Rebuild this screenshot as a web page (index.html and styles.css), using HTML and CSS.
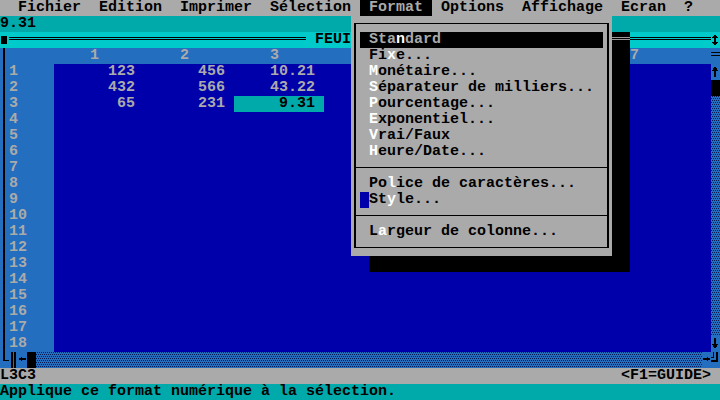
FILE: index.html
```html
<!DOCTYPE html>
<html lang="fr">
<head>
<meta charset="utf-8">
<title>Feuille de calcul</title>
<link rel="stylesheet" href="styles.css">
</head>
<body>
<div class="screen">
  <div class="menubar">  Fichier  Edition  Imprimer  Sélection <span class="menu-active"> Format </span> Options  Affichage  Ecran  ?</div>
  <div class="formula">9.31</div>
  <div class="titlebar">
    <span class="cell closebox"><span class="closebox-mark"></span></span>
    <span class="dline"></span>
    <span class="title"> FEUIL1.XLS </span>
    <span class="dline"></span>
    <span class="cell"><svg class="ico" viewBox="0 0 9 16" width="9" height="16"><polygon points="4,2 7.5,6 5,6 5,10 7.5,10 4,14 0.5,10 3,10 3,6 0.5,6"/></svg></span>
  </div>

  <div class="sheet">
    <div class="frame-left"></div>
    <div class="grid">
      <div class="grow head"><span class="rn"></span><span class="hc">1</span><span class="hc">2</span><span class="hc">3</span><span class="hc">4</span><span class="hc">5</span><span class="hc">6</span><span class="hc">7</span></div>
      <div class="grow"><span class="rn">1</span><div class="cells"><span class="c">123</span><span class="c">456</span><span class="c">10.21</span></div></div>
      <div class="grow"><span class="rn">2</span><div class="cells"><span class="c">432</span><span class="c">566</span><span class="c">43.22</span></div></div>
      <div class="grow"><span class="rn">3</span><div class="cells"><span class="c">65</span><span class="c">231</span><span class="c sel">9.31</span></div></div>
      <div class="grow"><span class="rn">4</span><div class="cells"></div></div>
      <div class="grow"><span class="rn">5</span><div class="cells"></div></div>
      <div class="grow"><span class="rn">6</span><div class="cells"></div></div>
      <div class="grow"><span class="rn">7</span><div class="cells"></div></div>
      <div class="grow"><span class="rn">8</span><div class="cells"></div></div>
      <div class="grow"><span class="rn">9</span><div class="cells"></div></div>
      <div class="grow"><span class="rn">10</span><div class="cells"></div></div>
      <div class="grow"><span class="rn">11</span><div class="cells"></div></div>
      <div class="grow"><span class="rn">12</span><div class="cells"></div></div>
      <div class="grow"><span class="rn">13</span><div class="cells"></div></div>
      <div class="grow"><span class="rn">14</span><div class="cells"></div></div>
      <div class="grow"><span class="rn">15</span><div class="cells"></div></div>
      <div class="grow"><span class="rn">16</span><div class="cells"></div></div>
      <div class="grow"><span class="rn">17</span><div class="cells"></div></div>
      <div class="grow"><span class="rn">18</span><div class="cells"></div></div>
    </div>
    <div class="vscroll">
      <span class="cell lb vs-split"></span>
      <span class="cell lb"><svg class="ico" viewBox="0 0 9 16" width="9" height="16"><polygon points="4,2 7.5,7 5,7 5,13 3,13 3,7 0.5,7"/></svg></span>
      <span class="cell thumb"></span>
      <span class="track vtrack"></span>
      <span class="cell lb"><svg class="ico" viewBox="0 0 9 16" width="9" height="16"><polygon points="4,13 7.5,8 5,8 5,2 3,2 3,8 0.5,8"/></svg></span>
    </div>
  </div>

  <div class="hscroll">
    <span class="cell lb"><svg class="ico" viewBox="0 0 9 16" width="9" height="16"><rect x="3" y="0" width="2" height="9"/><rect x="3" y="8" width="6" height="1"/></svg></span>
    <span class="cell lb"><svg class="ico" viewBox="0 0 9 16" width="9" height="16"><rect x="2" y="0" width="2" height="16"/><rect x="5" y="0" width="2" height="16"/></svg></span>
    <span class="cell lb"><svg class="ico" viewBox="0 0 9 16" width="9" height="16"><polygon points="0.5,7 4,4.5 4,6 8,6 8,8 4,8 4,9.5"/></svg></span>
    <span class="cell thumb"></span>
    <span class="track htrack"></span>
    <span class="cell lb"><svg class="ico" viewBox="0 0 9 16" width="9" height="16"><polygon points="8.5,7 5,4.5 5,6 1,6 1,8 5,8 5,9.5"/></svg></span>
    <span class="cell lb"><svg class="ico" viewBox="0 0 9 16" width="9" height="16"><rect x="5" y="0" width="2" height="10"/><rect x="0" y="8" width="7" height="2"/><rect x="2" y="0" width="1" height="6"/><rect x="0" y="5" width="3" height="1"/></svg></span>
  </div>

  <div class="status"><span class="txt">L3C3</span><span class="txt">&lt;F1=GUIDE&gt;</span></div>
  <div class="message">Applique ce format numérique à la sélection.</div>

  <div class="shadow-right"></div>
  <div class="shadow-bottom"></div>

  <div class="dropdown">
    <div class="menu-box">
      <div class="item hi"><span class="lead"></span><span class="label">Sta<span class="key">n</span>dard</span></div>
      <div class="item"><span class="lead"></span><span class="label">Fi<span class="key">x</span>e...</span></div>
      <div class="item"><span class="lead"></span><span class="label"><span class="key">M</span>onétaire...</span></div>
      <div class="item"><span class="lead"></span><span class="label"><span class="key">S</span>éparateur de milliers...</span></div>
      <div class="item"><span class="lead"></span><span class="label"><span class="key">P</span>ourcentage...</span></div>
      <div class="item"><span class="lead"></span><span class="label"><span class="key">E</span>xponentiel...</span></div>
      <div class="item"><span class="lead"></span><span class="label"><span class="key">V</span>rai/Faux</span></div>
      <div class="item"><span class="lead"></span><span class="label"><span class="key">H</span>eure/Date...</span></div>
      <div class="sep"></div>
      <div class="item"><span class="lead"></span><span class="label">Po<span class="key">l</span>ice de caractères...</span></div>
      <div class="item"><span class="lead cursor"></span><span class="label">St<span class="key">y</span>le...</span></div>
      <div class="sep"></div>
      <div class="item"><span class="lead"></span><span class="label">L<span class="key">a</span>rgeur de colonne...</span></div>
    </div>
  </div>
</div>
</body>
</html>
```
FILE: styles.css
```css
* { box-sizing: border-box; margin: 0; padding: 0; }
html, body { background: #000; }
body { margin: 0; }

.screen {
  position: relative;
  width: 720px;
  height: 400px;
  overflow: hidden;
  font-family: "Liberation Mono", "DejaVu Sans Mono", monospace;
  font-size: 15px;
  font-weight: bold;
  line-height: 16px;
  color: #000;
}

.menubar {
  height: 16px;
  background: #aaaaaa;
  white-space: pre;
}
.menu-active {
  display: inline-block;
  height: 16px;
  vertical-align: top;
  background: #000;
  color: #aaaaaa;
}

.formula {
  height: 16px;
  background: #00aaaa;
  white-space: pre;
}

.titlebar {
  display: flex;
  height: 16px;
  background: #00caca;
}
.cell {
  display: block;
  flex: none;
  width: 9px;
  height: 16px;
}
.ico { display: block; fill: #000; shape-rendering: crispEdges; }
.closebox { padding: 4px 0 0 1px; }
.closebox-mark {
  display: block;
  width: 6px;
  height: 8px;
  background: #000;
}
.dline {
  flex: 1;
  height: 16px;
  background: linear-gradient(to bottom, transparent 5px, #000 5px 6px, transparent 6px 7px, #000 7px 8px, transparent 8px);
}
.title { white-space: pre; flex: none; }

.sheet {
  display: flex;
  height: 304px;
}
.frame-left {
  width: 9px;
  flex: none;
  background: linear-gradient(90deg, transparent 3px, #000 3px 5px, transparent 5px), #236ebe;
}
.grid {
  flex: 1;
  display: flex;
  flex-direction: column;
}
.grow {
  display: flex;
  height: 16px;
}
.rn {
  flex: none;
  width: 45px;
  height: 16px;
  background: #236ebe;
  color: #aaaaaa;
  white-space: pre;
}
.head {
  background: #236ebe;
  color: #aaaaaa;
  overflow: hidden;
}
.hc {
  flex: none;
  width: 90px;
  padding-left: 36px;
  white-space: pre;
}
.cells {
  flex: 1;
  display: flex;
  background: #0000aa;
}
.c {
  flex: none;
  width: 90px;
  height: 16px;
  padding-right: 9px;
  text-align: right;
  color: #aaaaaa;
  white-space: pre;
}
.c.sel {
  background: #00aaaa;
  color: #000;
}

.vscroll {
  width: 9px;
  flex: none;
  display: flex;
  flex-direction: column;
}
.lb { background: #236ebe; }
.vs-split {
  background: linear-gradient(to bottom, transparent 4px, #000 4px 5px, transparent 5px 7px, #000 7px 8px, transparent 8px), #236ebe;
}
.thumb { background: #000; }
.track {
  background:
    conic-gradient(from 0deg at 1px 1px, #0a1a55 0 25%, transparent 0) 0 0 / 2px 4px,
    conic-gradient(from 0deg at 1px 1px, #0a1a55 0 25%, transparent 0) 1px 2px / 2px 4px,
    #236ebe;
}
.vtrack { flex: 1; width: 9px; }
.htrack { flex: 1; height: 16px; }

.hscroll {
  display: flex;
  height: 16px;
}

.status {
  display: flex;
  justify-content: space-between;
  height: 16px;
  padding-right: 9px;
  background: #aaaaaa;
}
.txt { white-space: pre; }

.message {
  height: 16px;
  background: #00aaaa;
  white-space: pre;
}

/* pull-down menu (overlay) */
.dropdown {
  position: absolute;
  left: 351px;
  top: 16px;
  width: 261px;
  height: 240px;
  background: #aaaaaa;
}
.menu-box {
  margin: 7px 0 0 3px;
  width: 255px;
  height: 225px;
  border-style: solid;
  border-color: #000;
  border-width: 1px 2px;
  padding: 8px 4px 7px;
}
.item {
  display: flex;
  height: 16px;
  white-space: pre;
  color: #000;
}
.item.hi { background: #000; color: #aaaaaa; }
.lead { flex: none; width: 9px; height: 16px; }
.lead.cursor { background: #0000aa; }
.key { color: #fff; }
.sep {
  height: 16px;
  margin: 0 -4px;
  background: linear-gradient(to bottom, transparent 7px, #000 7px 8px, transparent 8px);
}

.shadow-right {
  position: absolute;
  left: 612px;
  top: 32px;
  width: 18px;
  height: 224px;
  background:
    linear-gradient(to bottom, transparent 5px, #9a9a9a 5px 6px, transparent 6px 7px, #9a9a9a 7px 8px, transparent 8px) 0 0 / 100% 16px no-repeat,
    #000;
}
.shadow-bottom {
  position: absolute;
  left: 369px;
  top: 256px;
  width: 261px;
  height: 16px;
  background: #000;
}
```
